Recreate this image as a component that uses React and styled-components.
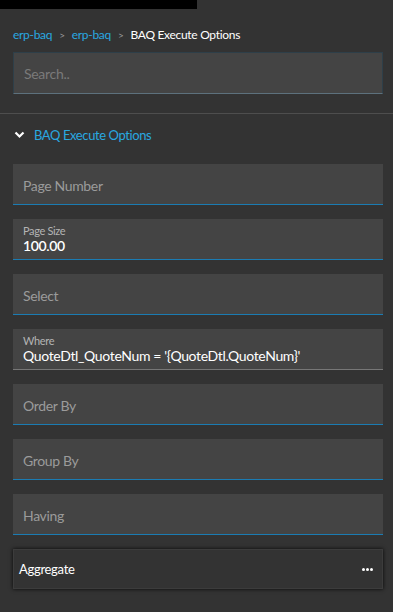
import styled, { createGlobalStyle } from 'styled-components';

const GlobalStyle = createGlobalStyle`
  html, body {
    margin: 0;
    padding: 0;
    background: #333333;
  }
  body {
    font-family: Lato, "Open Sans", sans-serif;
    width: 393px;
    height: 612px;
    overflow: hidden;
  }
`;

const Page = styled.div`
  background: #333333;
  min-height: 612px;
  display: flex;
  flex-direction: column;
`;

const TopBar = styled.div`
  width: 197px;
  height: 9px;
  background: #000;
`;

const Breadcrumbs = styled.nav`
  display: flex;
  align-items: center;
  gap: 7px;
  padding: 17px 13px 0;
  height: 17px;
  font-size: 12px;
  letter-spacing: -0.3px;
`;

const Crumb = styled.span`
  color: ${(props) => (props.current ? '#ffffff' : '#29a8e0')};
`;

const Sep = styled.span`
  color: #9a9a9a;
  font-size: 10px;
`;

const SearchBox = styled.div`
  margin: 9px 10px 0 13px;
  height: 40px;
  background: #444444;
  border: 1px solid #2e3f49;
  border-bottom: 1px solid #5d717d;
  display: flex;
  align-items: center;
  padding: 0 10px;
  color: #7a7a7a;
  font-size: 14px;
  letter-spacing: -0.3px;
`;

const Divider = styled.hr`
  border: none;
  border-top: 1px solid #4e4e4e;
  margin: 19px 0 0;
`;

const SectionHeader = styled.div`
  display: flex;
  align-items: center;
  gap: 9px;
  padding: 0 14px;
  height: 40px;
  margin-top: 1px;
  color: #29a8e0;
  font-size: 13px;
  letter-spacing: -0.4px;
`;

const Fields = styled.div`
  display: flex;
  flex-direction: column;
  gap: 14px;
  padding: 9px 10px 0 13px;
`;

const Field = styled.div`
  height: 40px;
  background: #444444;
  border-bottom: 1px solid ${(props) => (props.muted ? '#777777' : '#1b7cb3')};
  display: flex;
  flex-direction: column;
  justify-content: center;
  padding: 0 10px;
  box-sizing: content-box;
  letter-spacing: -0.35px;
`;

const Placeholder = styled.span`
  color: #9b9b9b;
  font-size: 14px;
  padding-top: 3px;
`;

const Label = styled.span`
  color: #b4b4b4;
  font-size: 11px;
  line-height: 13px;
`;

const Value = styled.span`
  color: #ffffff;
  font-size: 14px;
  line-height: 17px;
  font-weight: ${(props) => (props.bold ? 600 : 400)};
`;

const Aggregate = styled.div`
  height: 38px;
  background: #333333;
  box-shadow: 0 0 4px rgba(0, 0, 0, 0.9);
  border: 1px solid #3c3c3c;
  display: flex;
  align-items: center;
  justify-content: space-between;
  padding: 0 9px 0 5px;
  color: #ffffff;
  font-size: 13px;
  letter-spacing: -0.3px;
`;

const Dots = styled.span`
  display: flex;
  gap: 1px;
`;

const Dot = styled.i`
  width: 3px;
  height: 3px;
  border-radius: 50%;
  background: #ffffff;
`;

const Chevron = () => (
  <svg width="11" height="8" viewBox="0 0 11 8">
    <path d="M1.5 1.5 L5.5 5.5 L9.5 1.5" fill="none" stroke="#ffffff" strokeWidth="2.2" />
  </svg>
);

const fields = [
  { placeholder: 'Page Number' },
  { label: 'Page Size', value: '100.00', bold: true },
  { placeholder: 'Select' },
  { label: 'Where', value: "QuoteDtl_QuoteNum = '{QuoteDtl.QuoteNum}'", muted: true },
  { placeholder: 'Order By' },
  { placeholder: 'Group By' },
  { placeholder: 'Having' },
];

const App = () => {
  return (
    <Page>
      <GlobalStyle />
      <TopBar />
      <Breadcrumbs>
        <Crumb>erp-baq</Crumb>
        <Sep>&gt;</Sep>
        <Crumb>erp-baq</Crumb>
        <Sep>&gt;</Sep>
        <Crumb current>BAQ Execute Options</Crumb>
      </Breadcrumbs>
      <SearchBox>Search..</SearchBox>
      <Divider />
      <SectionHeader>
        <Chevron />
        BAQ Execute Options
      </SectionHeader>
      <Fields>
        {fields.map((f) => (
          <Field key={f.placeholder || f.label} muted={f.muted}>
            {f.label ? (
              <>
                <Label>{f.label}</Label>
                <Value bold={f.bold}>{f.value}</Value>
              </>
            ) : (
              <Placeholder>{f.placeholder}</Placeholder>
            )}
          </Field>
        ))}
        <Aggregate>
          Aggregate
          <Dots>
            <Dot />
            <Dot />
            <Dot />
          </Dots>
        </Aggregate>
      </Fields>
    </Page>
  );
};

export default App;
